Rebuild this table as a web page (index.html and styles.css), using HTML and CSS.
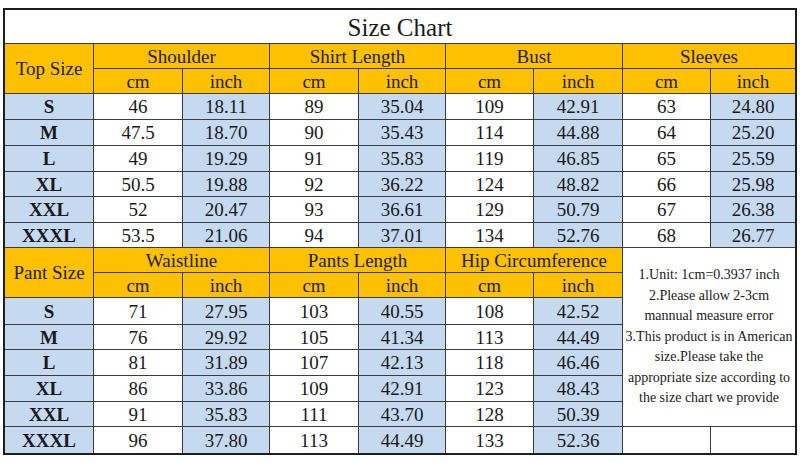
FILE: index.html
```html
<!DOCTYPE html>
<html>
<head>
<meta charset="utf-8">
<title>Size Chart</title>
<link rel="stylesheet" href="styles.css">
</head>
<body>
<div class="chart">
  <div class="c title">Size Chart</div>

  <div class="c hd rs2">Top Size</div>
  <div class="c hd cs2">Shoulder</div>
  <div class="c hd cs2">Shirt Length</div>
  <div class="c hd cs2">Bust</div>
  <div class="c hd cs2">Sleeves</div>
  <div class="c hd">cm</div><div class="c hd">inch</div>
  <div class="c hd">cm</div><div class="c hd">inch</div>
  <div class="c hd">cm</div><div class="c hd">inch</div>
  <div class="c hd">cm</div><div class="c hd">inch</div>

  <div class="c sz">S</div><div class="c w">46</div><div class="c b">18.11</div><div class="c w">89</div><div class="c b">35.04</div><div class="c w">109</div><div class="c b">42.91</div><div class="c w">63</div><div class="c b">24.80</div>
  <div class="c sz">M</div><div class="c w">47.5</div><div class="c b">18.70</div><div class="c w">90</div><div class="c b">35.43</div><div class="c w">114</div><div class="c b">44.88</div><div class="c w">64</div><div class="c b">25.20</div>
  <div class="c sz">L</div><div class="c w">49</div><div class="c b">19.29</div><div class="c w">91</div><div class="c b">35.83</div><div class="c w">119</div><div class="c b">46.85</div><div class="c w">65</div><div class="c b">25.59</div>
  <div class="c sz">XL</div><div class="c w">50.5</div><div class="c b">19.88</div><div class="c w">92</div><div class="c b">36.22</div><div class="c w">124</div><div class="c b">48.82</div><div class="c w">66</div><div class="c b">25.98</div>
  <div class="c sz">XXL</div><div class="c w">52</div><div class="c b">20.47</div><div class="c w">93</div><div class="c b">36.61</div><div class="c w">129</div><div class="c b">50.79</div><div class="c w">67</div><div class="c b">26.38</div>
  <div class="c sz">XXXL</div><div class="c w">53.5</div><div class="c b">21.06</div><div class="c w">94</div><div class="c b">37.01</div><div class="c w">134</div><div class="c b">52.76</div><div class="c w">68</div><div class="c b">26.77</div>

  <div class="c hd rs2">Pant Size</div>
  <div class="c hd cs2">Waistline</div>
  <div class="c hd cs2">Pants Length</div>
  <div class="c hd cs2">Hip Circumference</div>
  <div class="c notes">
    <p>1.Unit: 1cm=0.3937 inch<br>2.Please allow 2-3cm<br>mannual measure error<br>3.This product is in American<br>size.Please take the<br>appropriate size according to<br>the size chart we provide</p>
  </div>
  <div class="c hd">cm</div><div class="c hd">inch</div>
  <div class="c hd">cm</div><div class="c hd">inch</div>
  <div class="c hd">cm</div><div class="c hd">inch</div>

  <div class="c sz">S</div><div class="c w">71</div><div class="c b">27.95</div><div class="c w">103</div><div class="c b">40.55</div><div class="c w">108</div><div class="c b">42.52</div>
  <div class="c sz">M</div><div class="c w">76</div><div class="c b">29.92</div><div class="c w">105</div><div class="c b">41.34</div><div class="c w">113</div><div class="c b">44.49</div>
  <div class="c sz">L</div><div class="c w">81</div><div class="c b">31.89</div><div class="c w">107</div><div class="c b">42.13</div><div class="c w">118</div><div class="c b">46.46</div>
  <div class="c sz">XL</div><div class="c w">86</div><div class="c b">33.86</div><div class="c w">109</div><div class="c b">42.91</div><div class="c w">123</div><div class="c b">48.43</div>
  <div class="c sz">XXL</div><div class="c w">91</div><div class="c b">35.83</div><div class="c w">111</div><div class="c b">43.70</div><div class="c w">128</div><div class="c b">50.39</div>
  <div class="c sz">XXXL</div><div class="c w">96</div><div class="c b">37.80</div><div class="c w">113</div><div class="c b">44.49</div><div class="c w">133</div><div class="c b">52.36</div><div class="c w"></div><div class="c w"></div>
</div>
</body>
</html>
```

FILE: styles.css
```css
html, body {
  margin: 0;
  padding: 0;
  background: #ffffff;
}

body {
  font-family: "Liberation Serif", "Times New Roman", serif;
  color: #1a1a1a;
}

.chart {
  margin: 8px 0 0 3px;
  width: 790px;
  display: grid;
  grid-template-columns: 88px 88px 86px 88px 86px 87px 88px 87px 84px;
  grid-template-rows: 33px 24px 24px 25px 25px 25px 24px 25px 24px 24px 24px 26px 24px 25px 25px 24px 26px;
  gap: 1px;
  background: #3c3c3c;
  border: 2px solid #1e1e1e;
}

.c {
  display: flex;
  align-items: center;
  justify-content: center;
  font-size: 19px;
  line-height: 1;
  white-space: nowrap;
}

.title {
  grid-column: 1 / -1;
  background: #ffffff;
  font-size: 25px;
  padding-top: 2px;
}

.hd {
  background: #ffc000;
  color: #222;
}

.rs2 {
  grid-row: span 2;
}

.cs2 {
  grid-column: span 2;
}

.sz {
  background: #c5d9f1;
  font-weight: bold;
}

.w {
  background: #ffffff;
}

.b {
  background: #c5d9f1;
}

.notes {
  grid-column: 8 / span 2;
  grid-row: span 7;
  background: #ffffff;
  white-space: normal;
}

.notes p {
  margin: 0;
  font-size: 14px;
  line-height: 20.5px;
  text-align: center;
}
```
